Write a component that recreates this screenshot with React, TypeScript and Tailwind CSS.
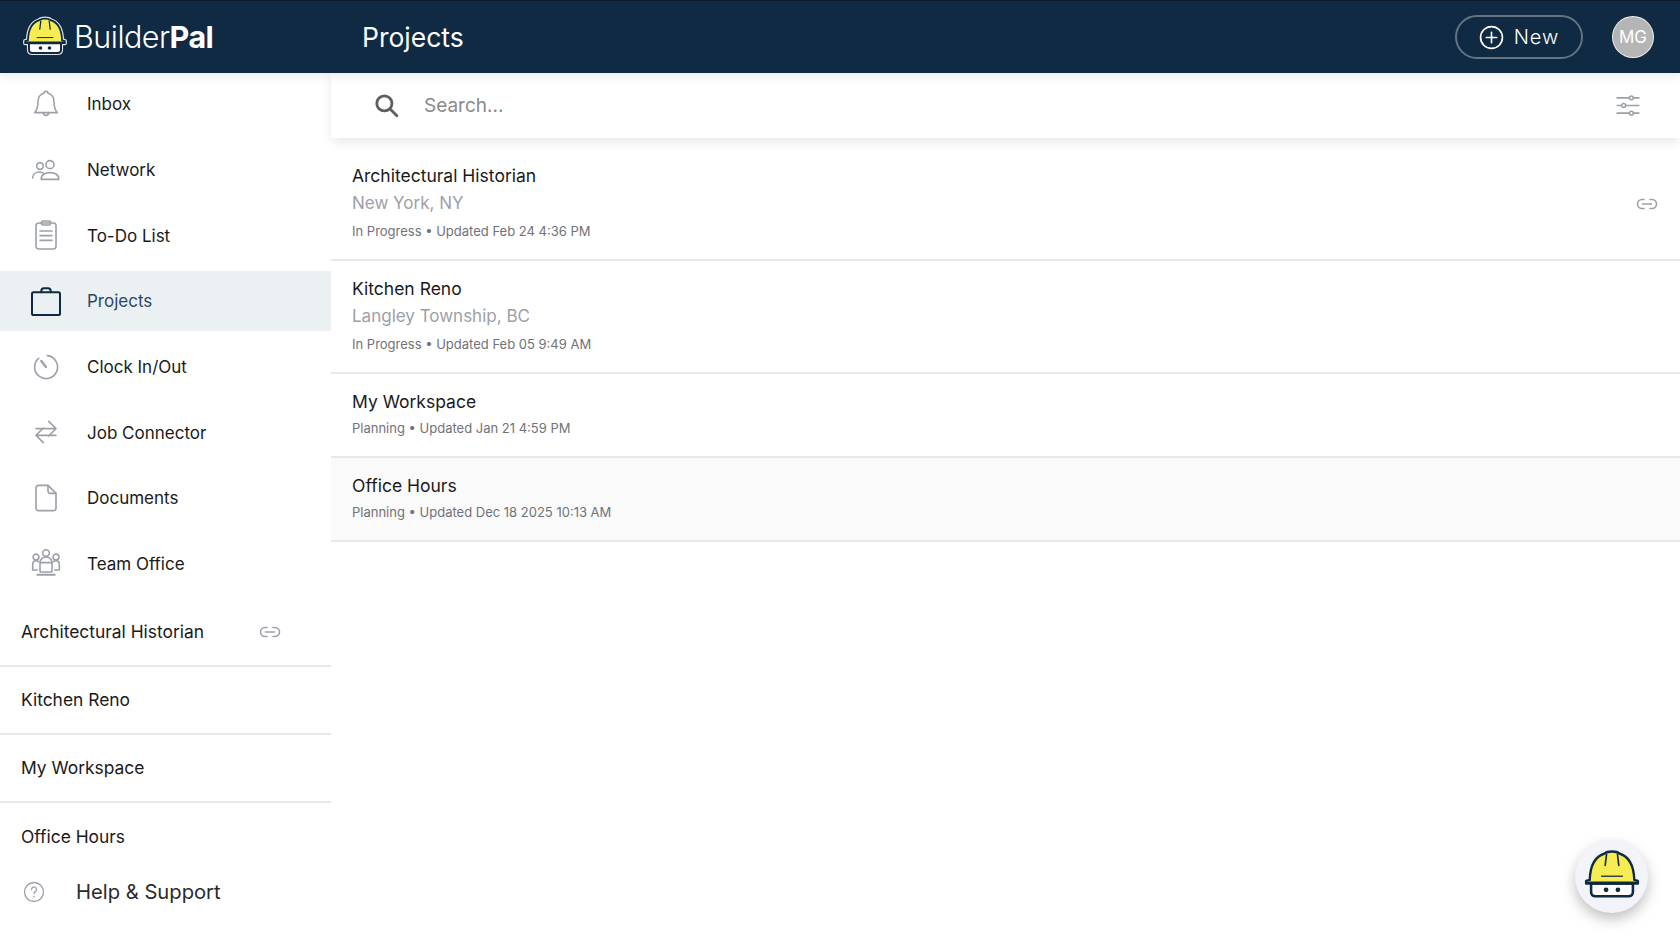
import React from "react";

const FONT = "font-['Inter','Noto_Sans',sans-serif]";

const DOME = "M5.500 33C6 16 12 7 22 4c3-3 13-3 16 0C48 7 54 16 54.500 33l4 1v3H1.500v-3z";
const FACE = "M7 37v9c0 3 2 5 5 5h36c3 0 5-2 5-5v-9z";

function Helmet({ className, halo = false }: { className?: string; halo?: boolean }) {
  const navy = "#0f2a42";
  return (
    <svg viewBox="-3 -2 66 56" className={className} fill="none">
      {halo && (
        <g stroke="#dfe3e6" strokeWidth="6" strokeLinejoin="round">
          <path d={DOME} />
          <path d={FACE} />
        </g>
      )}
      <path d={FACE} fill="#ffffff" stroke={navy} strokeWidth="2.800" />
      <circle cx="23.500" cy="44" r="2.600" fill={navy} />
      <circle cx="36.500" cy="44" r="2.600" fill={navy} />
      <path d={DOME} fill="#f7ec52" stroke={navy} strokeWidth="2.600" strokeLinejoin="round" />
      <path d="M1.500 36h57" stroke={navy} strokeWidth="2.600" />
      <path d="M24 5l-1.500 12M36 5l1.500 12" stroke={navy} strokeWidth="1.800" strokeLinecap="round" />
      <path d="M18 29h24" stroke={navy} strokeWidth="1.400" />
    </svg>
  );
}

function Icon({ children, className = "w-[32px] h-[32px] text-[#9ca0a8]", box = "0 0 24 24" }: { children: React.ReactNode; className?: string; box?: string }) {
  return (
    <svg viewBox={box} className={className} fill="none" stroke="currentColor" strokeWidth="1.200" strokeLinecap="round" strokeLinejoin="round">
      {children}
    </svg>
  );
}

function LinkIcon({ className }: { className?: string }) {
  return (
    <Icon className={className} box="0 0 22 12">
      <path d="M8 1.500H6a4.500 4.500 0 0 0 0 9h2M14 1.500h2a4.500 4.500 0 0 1 0 9h-2M6.500 6h9" strokeWidth="1.600" />
    </Icon>
  );
}

const navItems: { label: string; active?: boolean; icon: React.ReactNode }[] = [
  {
    label: "Inbox",
    icon: (
      <Icon>
        <path d="M12 2.500a1.500 1.500 0 0 1 1.500 1.500c3 .7 4.500 3.400 4.500 6.500 0 3.500.8 6 2.500 8h-17c1.700-2 2.500-4.500 2.500-8 0-3.100 1.500-5.800 4.500-6.500A1.500 1.500 0 0 1 12 2.500z" />
        <path d="M10 18.500a2 2 0 0 0 4 0" />
      </Icon>
    ),
  },
  {
    label: "Network",
    icon: (
      <Icon>
        <circle cx="7.500" cy="9" r="2.500" />
        <circle cx="15" cy="8" r="3" />
        <path d="M2 18c0-3 2.500-4.500 5-4.500 1 0 2 .2 2.800.7M8.500 19c-.5-3.500 3-5 6.500-5s7 1.500 6.500 5z" />
      </Icon>
    ),
  },
  {
    label: "To-Do List",
    icon: (
      <Icon>
        <rect x="4.500" y="3" width="15" height="19.500" rx="2" />
        <rect x="8.500" y="1.500" width="7" height="3" rx="1.200" />
        <path d="M7.500 9h9M7.500 12.500h9M7.500 16h9" />
      </Icon>
    ),
  },
  {
    label: "Projects",
    active: true,
    icon: (
      <Icon className="w-[32px] h-[32px] text-[#0f2a42]">
        <rect x="1.500" y="5.500" width="21" height="17" rx="1.200" strokeWidth="1.500" />
        <path d="M8.500 5.500V4.500a2 2 0 0 1 2-2h3a2 2 0 0 1 2 2v1" strokeWidth="1.500" />
      </Icon>
    ),
  },
  {
    label: "Clock In/Out",
    icon: (
      <Icon>
        <path d="M13 3.500a8.600 8.600 0 1 1-6.500 2" />
        <path d="M8.500 7.500 12 12" strokeWidth="1.800" />
      </Icon>
    ),
  },
  {
    label: "Job Connector",
    icon: (
      <Icon>
        <path d="M4.500 9.500h15M14 4l5.500 5.500L14 15M19.500 14.500h-15M10 9l-5.500 5.500L10 20" />
      </Icon>
    ),
  },
  {
    label: "Documents",
    icon: (
      <Icon>
        <path d="M6.500 2.500h7l6 6v11a2 2 0 0 1-2 2h-11a2 2 0 0 1-2-2v-15a2 2 0 0 1 2-2z" />
        <path d="M13.500 2.500v4a2 2 0 0 0 2 2h4" />
      </Icon>
    ),
  },
  {
    label: "Team Office",
    icon: (
      <Icon>
        <circle cx="12" cy="3.800" r="2.500" />
        <circle cx="4.500" cy="6.800" r="2.200" />
        <circle cx="19.500" cy="6.800" r="2.200" />
        <path d="M7.500 11c0-2.400 2-4.200 4.500-4.200s4.500 1.800 4.500 4.200" />
        <path d="M5.500 16.500H2V13c0-2 1-3.500 2.500-3.500 .8 0 1.500.3 2 .8M18.500 16.500H22V13c0-2-1-3.500-2.500-3.500-.8 0-1.500.3-2 .8" />
        <rect x="7.500" y="11" width="9" height="7" rx=".6" />
        <path d="M5.500 20h13" strokeWidth="1.500" />
      </Icon>
    ),
  },
];

const sideProjects = ["Architectural Historian", "Kitchen Reno", "My Workspace", "Office Hours"];

const projects = [
  { title: "Architectural Historian", place: "New York, NY", meta: "In Progress • Updated Feb 24 4:36 PM", link: true, cls: "h-[123px] pt-[25px]" },
  { title: "Kitchen Reno", place: "Langley Township, BC", meta: "In Progress • Updated Feb 05 9:49 AM", cls: "h-[113px] pt-[15px]" },
  { title: "My Workspace", meta: "Planning • Updated Jan 21 4:59 PM", cls: "h-[84px] pt-[15px]" },
  { title: "Office Hours", meta: "Planning • Updated Dec 18 2025 10:13 AM", cls: "h-[84px] pt-[15px] bg-[#fafafa]" },
];

export default function App() {
  return (
    <div className={`${FONT} relative w-[1680px] h-[945px] overflow-hidden bg-white flex flex-col text-[#1a1a1a]`}>
      <header className="h-[73px] shrink-0 bg-[#0f2a42] border-t border-[#0a1a28] flex items-center z-20 shadow-[0_4px_10px_rgba(0,0,0,0.08)]">
        <div className="w-[362px] shrink-0 pl-[22px] flex items-center gap-[6px]">
          <Helmet className="w-[46px] h-[39px] mb-[3px]" halo />
          <span className="text-[30.500px] leading-none text-white font-light tracking-[-0.5px]">
            Builder<span className="font-bold">Pal</span>
          </span>
        </div>
        <h1 className="text-[26.500px] pt-[1px] font-normal text-white">Projects</h1>
        <div className="ml-auto flex items-center pr-[26px] gap-[29px]">
          <button className="w-[128px] h-[44px] rounded-full border-[2.500px] border-white/35 flex items-center justify-center gap-[10px] text-white">
            <svg viewBox="0 0 24 24" className="w-[25px] h-[25px]" fill="none" stroke="currentColor" strokeWidth="1.600" strokeLinecap="round">
              <circle cx="12" cy="12" r="10.500" />
              <path d="M12 7v10M7 12h10" />
            </svg>
            <span className="text-[20px] font-light tracking-[1px]">New</span>
          </button>
          <div className="w-[42px] h-[42px] pt-[2px] rounded-full bg-[#b5b5b5] border border-white/80 flex items-center justify-center text-white text-[17px]">MG</div>
        </div>
      </header>

      <div className="flex-1 flex min-h-0">
        <aside className="w-[331px] shrink-0 flex flex-col">
          <nav className="flex flex-col gap-[5.700px] pt-px">
            {navItems.map((item) => (
              <div key={item.label} className={`h-[60px] flex items-center ${item.active ? "bg-[#ebf0f3]" : ""}`}>
                <div className="w-[87px] shrink-0 pl-[30px]">
                  <div className="w-[32px] flex justify-center">{item.icon}</div>
                </div>
                <span className={`text-[17px] pt-[2px] ${item.active ? "text-[#2c4763]" : ""}`}>{item.label}</span>
              </div>
            ))}
          </nav>
          <div className="mt-[5px]">
            {sideProjects.map((name, i) => (
              <div key={name} className={`h-[68px] pl-[21px] flex items-center text-[17.400px] ${i < 3 ? "border-b-2 border-[#e8e8e8]" : ""}`}>
                <span>{name}</span>
                {i === 0 && <LinkIcon className="ml-[55px] w-[22px] h-[12px] text-[#9ca0a8]" />}
              </div>
            ))}
          </div>
          <div className="flex items-center pl-[23px] h-[42px]">
            <svg viewBox="0 0 22 22" className="w-[22px] h-[22px] text-[#9ca0a8]" fill="none" stroke="currentColor" strokeWidth="1.300" strokeLinecap="round">
              <circle cx="11" cy="11" r="9.500" />
              <path d="M8.500 8.500a2.500 2.500 0 1 1 3.800 2.100c-.9.600-1.300 1-1.300 2" />
              <path d="M11 15.500v.3" strokeWidth="1.600" />
            </svg>
            <span className="ml-[31px] text-[20.200px] text-[#2a2a2a]">Help &amp; Support</span>
          </div>
        </aside>

        <main className="flex-1 min-w-0 flex flex-col">
          <div className="h-[65px] shrink-0 flex items-center pl-[42px] pr-[40px] bg-white z-10 shadow-[0_4px_10px_rgba(0,0,0,0.09)]">
            <svg viewBox="0 0 24 24" className="w-[26px] h-[26px] mb-[2px] text-[#5f5f5f]" fill="none" stroke="currentColor" strokeWidth="2.600" strokeLinecap="round">
              <circle cx="10.500" cy="10.500" r="7" />
              <path d="M16 16l6 6" />
            </svg>
            <span className="ml-[25px] pt-[2px] text-[19px] text-[#8a8a8a]">Search...</span>
            <svg viewBox="0 0 24 22" className="ml-auto w-[24px] h-[21px] text-[#9ca0a8]" fill="none" stroke="currentColor" strokeWidth="1.600">
              <path d="M0 3h13.500M17.500 3H24M0 11h5.500M9.500 11H24M0 19h13.500M17.500 19H24" />
              <circle cx="15.500" cy="3" r="2" />
              <circle cx="7.500" cy="11" r="2" />
              <circle cx="15.500" cy="19" r="2" />
            </svg>
          </div>
          {projects.map((p) => (
            <div key={p.title} className={`relative shrink-0 pl-[21px] border-b-2 border-[#e8e8e8] ${p.cls}`}>
              <div className="text-[17.500px] leading-[26px]">{p.title}</div>
              {p.place && <div className="text-[17px] leading-[28px] text-[#9ca0a8]">{p.place}</div>}
              <div className={`text-[13px] leading-[26px] text-[#6f7278] ${p.place ? "mt-[1px]" : "-mt-[0.500px]"}`}>{p.meta}</div>
              {p.link && <LinkIcon className="absolute right-[22px] top-[60px] w-[22px] h-[12px] text-[#9ca0a8]" />}
            </div>
          ))}
        </main>
      </div>

      <div className="absolute left-[1575px] top-[840px] w-[73px] h-[73px] pb-[6px] rounded-full bg-[#f2f4f9] shadow-[0_6px_14px_rgba(0,0,0,0.25)] flex items-center justify-center">
        <Helmet className="w-[60px] h-[51px]" />
      </div>
    </div>
  );
}
